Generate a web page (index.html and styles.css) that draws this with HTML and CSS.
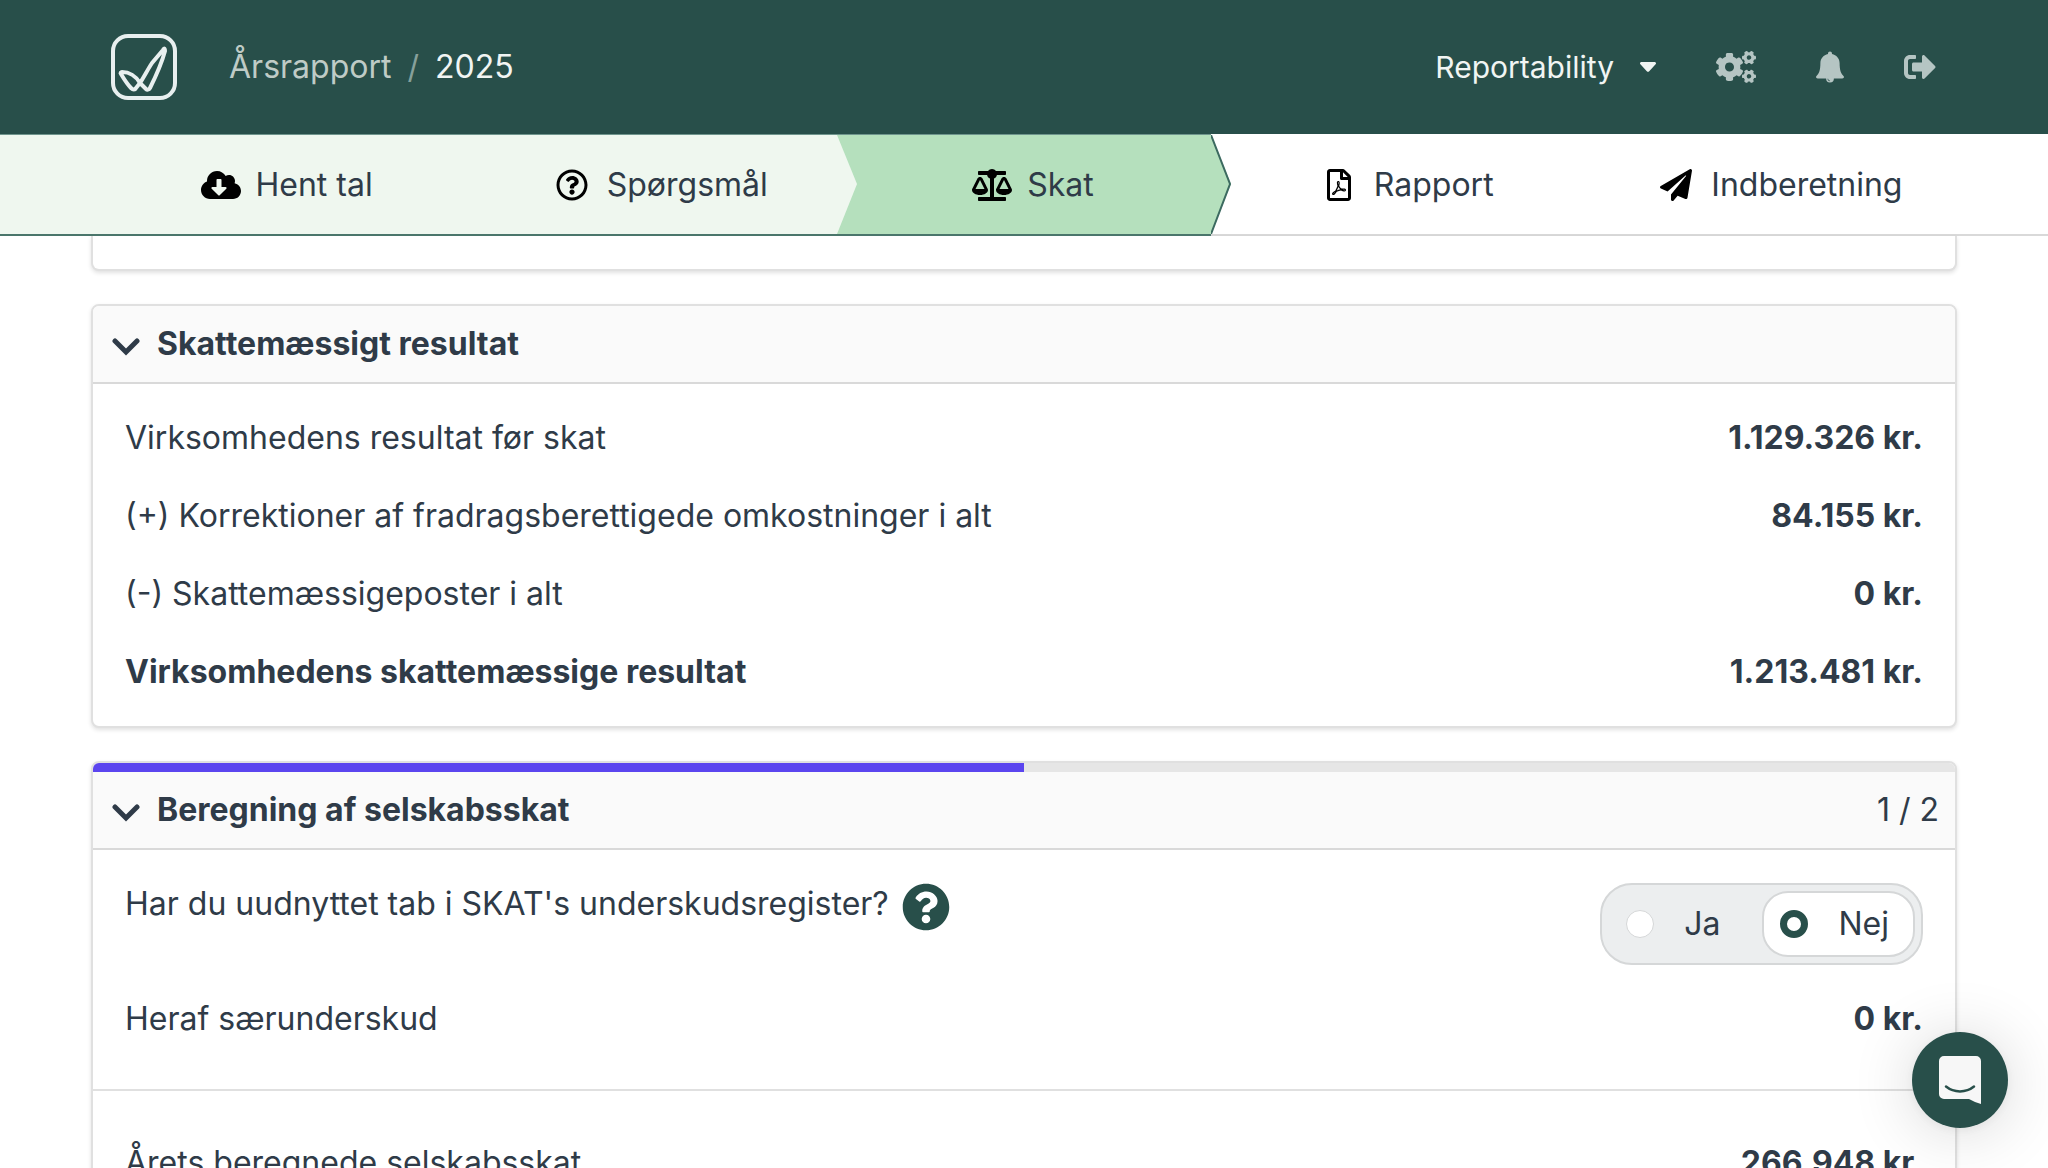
FILE: index.html
```html
<!DOCTYPE html>
<html lang="da">
<head>
  <meta charset="UTF-8">
  <meta name="viewport" content="width=device-width, initial-scale=1.0">
  <title>Årsrapport 2025 - Skat</title>
  <link rel="stylesheet" href="styles.css">
</head>
<body>
  <header class="topbar">
    <a class="logo" href="#" aria-label="Forside">
      <svg width="66" height="66" viewBox="0 0 66 66" fill="none" stroke="currentColor">
        <rect x="2" y="2" width="62" height="62" rx="15" stroke-width="4"/>
        <path d="M11 38C18 38 25 42 29 49L35 55C36 56 38 56 39 54C44 44 51 28 54 17C54 14 53 14 52 16L41 29C37 35 33 43 29 49L25 54C24 56 22 56 20 54C16 50 13 45 10 40C9 39 10 38 11 38Z" stroke-width="4" stroke-linejoin="round"/>
      </svg>
    </a>
    <nav class="breadcrumb">
      <a href="#">Årsrapport</a>
      <span class="slash">/</span>
      <span class="current">2025</span>
    </nav>
    <div class="tools">
      <button class="company" type="button">
        Reportability
        <svg width="16" height="10" viewBox="0 0 16 10" fill="currentColor"><path d="M1.500 0h13c1.300 0 2 1.400 1.100 2.300L9.200 9.300c-.7.700-1.700.7-2.400 0L.4 2.300C-.5 1.400.2 0 1.500 0z"/></svg>
      </button>
      <button class="tool" type="button" aria-label="Indstillinger">
        <svg width="40" height="32" viewBox="0 0 640 512" fill="currentColor"><path d="M512.1 191l-8.2 14.3c-3 5.3-9.4 7.5-15.1 5.4-11.8-4.4-22.6-10.7-32.1-18.6-4.6-3.800-5.800-10.500-2.800-15.700l8.200-14.300c-6.900-8-12.300-17.300-15.900-27.400h-16.500c-6 0-11.200-4.300-12.200-10.300-2-12-2.100-24.600 0-37.100 1-6 6.200-10.400 12.200-10.400h16.500c3.600-10.100 9-19.400 15.900-27.400l-8.200-14.300c-3-5.200-1.900-11.900 2.800-15.700 9.500-7.900 20.400-14.200 32.100-18.600 5.700-2.100 12.100.1 15.100 5.400l8.200 14.300c10.500-1.900 21.200-1.900 31.700 0L552 6.300c3-5.300 9.400-7.500 15.100-5.400 11.800 4.400 22.600 10.700 32.100 18.600 4.600 3.800 5.800 10.500 2.800 15.700l-8.200 14.300c6.900 8 12.300 17.300 15.900 27.400h16.500c6 0 11.200 4.300 12.200 10.300 2 12 2.100 24.600 0 37.100-1 6-6.200 10.400-12.200 10.400h-16.500c-3.600 10.100-9 19.400-15.900 27.400l8.200 14.300c3 5.200 1.900 11.900-2.800 15.700-9.500 7.900-20.400 14.200-32.100 18.600-5.700 2.100-12.100-.1-15.100-5.400l-8.200-14.300c-10.400 1.900-21.200 1.900-31.700 0zm-10.500-58.800c38.500 29.600 82.400-14.300 52.800-52.800-38.500-29.700-82.400 14.300-52.800 52.800zM386.300 286.100l33.700 16.800c10.100 5.800 14.500 18.100 10.500 29.100-8.900 24.200-26.400 46.400-42.600 65.800-7.400 8.900-20.200 11.100-30.300 5.300l-29.100-16.800c-16 13.700-34.600 24.600-54.900 31.700v33.600c0 11.600-8.300 21.600-19.700 23.600-24.600 4.200-50.400 4.400-75.900 0-11.500-2-20-11.900-20-23.600V418c-20.300-7.200-38.900-18-54.900-31.700L74 403c-10 5.800-22.900 3.600-30.300-5.300-16.200-19.400-33.300-41.600-42.200-65.700-4-10.900.4-23.200 10.500-29.100l33.300-16.800c-3.900-20.900-3.900-42.400 0-63.400L12 205.800c-10.100-5.800-14.600-18.100-10.500-29 8.900-24.200 26-46.400 42.200-65.800 7.400-8.900 20.200-11.100 30.300-5.300l29.100 16.800c16-13.700 34.600-24.600 54.900-31.700V57.100c0-11.500 8.200-21.500 19.600-23.500 24.600-4.200 50.500-4.400 76-.1 11.500 2 20 11.900 20 23.600v33.600c20.300 7.200 38.900 18 54.900 31.700l29.100-16.800c10-5.800 22.900-3.600 30.300 5.300 16.200 19.400 33.200 41.600 42.100 65.800 4 10.900.1 23.200-10 29.100l-33.700 16.800c3.900 21 3.900 42.500 0 63.500zm-117.600 21.100c59.200-77-28.700-164.900-105.700-105.700-59.200 77 28.700 164.900 105.700 105.700zm243.400 182.700l-8.200 14.300c-3 5.300-9.400 7.500-15.100 5.400-11.800-4.400-22.600-10.700-32.100-18.600-4.600-3.800-5.800-10.500-2.800-15.700l8.200-14.300c-6.900-8-12.300-17.300-15.900-27.400h-16.500c-6 0-11.200-4.300-12.200-10.300-2-12-2.100-24.600 0-37.100 1-6 6.200-10.400 12.200-10.400h16.500c3.600-10.100 9-19.400 15.900-27.400l-8.200-14.300c-3-5.200-1.900-11.900 2.800-15.700 9.500-7.900 20.400-14.200 32.100-18.600 5.700-2.100 12.100.1 15.100 5.400l8.200 14.300c10.500-1.900 21.200-1.900 31.700 0l8.200-14.300c3-5.300 9.400-7.500 15.100-5.400 11.800 4.400 22.600 10.700 32.100 18.600 4.600 3.800 5.800 10.500 2.800 15.700l-8.200 14.300c6.900 8 12.300 17.300 15.900 27.400h16.500c6 0 11.200 4.300 12.200 10.300 2 12 2.100 24.600 0 37.100-1 6-6.200 10.400-12.200 10.400h-16.500c-3.600 10.100-9 19.400-15.900 27.400l8.200 14.300c3 5.200 1.900 11.900-2.800 15.700-9.500 7.900-20.400 14.200-32.100 18.600-5.700 2.100-12.100-.1-15.100-5.400l-8.200-14.300c-10.400 1.900-21.200 1.900-31.700 0zM501.600 431c38.500 29.600 82.400-14.300 52.800-52.800-38.500-29.600-82.400 14.300-52.800 52.800z"/></svg>
      </button>
      <button class="tool" type="button" aria-label="Notifikationer">
        <svg width="28" height="32" viewBox="0 0 28 32" fill="currentColor"><path fill-rule="evenodd" d="M14 .5c1.200 0 2.100 1 2 2.400 4.400.9 7.600 4.500 7.600 9.100 0 7.500 1.400 10.500 3.900 13 1 1.100.3 2.500-1.200 2.500h-8.400a3.900 3.900 0 0 1-7.800 0H1.700C.2 27.500-.5 26.100.5 25c2.500-2.500 3.900-5.500 3.900-13 0-4.600 3.200-8.200 7.600-9.100-.1-1.400.8-2.400 2-2.400zM11.500 27.700c.1 1.400 1.100 2.400 2.500 2.500v-.7c-1 0-1.800-.8-1.800-1.800z"/></svg>
      </button>
      <button class="tool" type="button" aria-label="Log ud">
        <svg width="32" height="32" viewBox="0 0 512 512" fill="currentColor"><path d="M497 273L329 441c-15 15-41 4.500-41-17v-96H152c-13.300 0-24-10.700-24-24v-96c0-13.300 10.700-24 24-24h136V88c0-21.400 25.900-32 41-17l168 168c9.300 9.400 9.300 24.600 0 34zM192 436v-40c0-6.600-5.400-12-12-12H96c-17.700 0-32-14.300-32-32V160c0-17.700 14.300-32 32-32h84c6.600 0 12-5.400 12-12V76c0-6.600-5.400-12-12-12H96c-53 0-96 43-96 96v192c0 53 43 96 96 96h84c6.600 0 12-5.400 12-12z"/></svg>
      </button>
    </div>
  </header>

  <nav class="steps">
    <a class="step done" href="#">
      <svg class="step-icon" viewBox="0 0 640 512"><path d="M537.6 226.600c4.100-10.700 6.400-22.400 6.400-34.600 0-53-43-96-96-96-19.700 0-38.100 6-53.300 16.200C367 64.200 315.300 32 256 32c-88.400 0-160 71.600-160 160 0 2.700.1 5.400.2 8.100C40.200 219.800 0 273.200 0 336c0 79.500 64.500 144 144 144h368c70.700 0 128-57.300 128-128 0-61.900-44-113.600-102.400-125.400zm-132.900 88.700L299.300 420.700c-6.200 6.200-16.400 6.200-22.600 0L171.300 315.300c-10.100-10.100-2.900-27.300 11.300-27.300H248V176c0-8.800 7.200-16 16-16h48c8.800 0 16 7.200 16 16v112h65.400c14.200 0 21.400 17.200 11.300 27.300z"/></svg>
      Hent tal
    </a>
    <a class="step done" href="#">
      <svg class="step-icon" viewBox="0 0 512 512"><path d="M256 8C119.043 8 8 119.083 8 256c0 136.997 111.043 248 248 248s248-111.003 248-248C504 119.083 392.957 8 256 8zm0 448c-110.532 0-200-89.431-200-200 0-110.495 89.472-200 200-200 110.491 0 200 89.471 200 200 0 110.530-89.431 200-200 200zm107.244-255.200c0 67.052-72.421 68.084-72.421 92.863V300c0 6.627-5.373 12-12 12h-45.647c-6.627 0-12-5.373-12-12v-8.659c0-35.745 27.100-50.034 47.579-61.516 17.561-9.845 28.324-16.541 28.324-29.579 0-17.246-21.999-28.693-39.784-28.693-23.189 0-33.894 10.977-48.942 29.969-4.057 5.120-11.460 6.071-16.666 2.124l-27.824-21.098c-5.107-3.872-6.251-11.066-2.644-16.363C184.846 131.491 214.940 112 261.794 112c49.071 0 101.450 38.304 101.450 88.800zM298 368c0 23.159-18.841 42-42 42s-42-18.841-42-42 18.841-42 42-42 42 18.841 42 42z"/></svg>
      Spørgsmål
      <svg class="arrow" width="20" height="99" viewBox="0 0 20 99"><path d="M0 0L20 49L0 99z"/></svg>
    </a>
    <a class="step active" href="#" aria-current="step">
      <svg class="step-icon" viewBox="0 0 640 512"><path d="M256 336h-.02c0-16.180 1.340-8.730-85.050-181.510-17.650-35.290-68.190-35.360-85.870 0C-2.060 328.750.02 320.330.02 336H0c0 44.180 57.310 80 128 80s128-35.820 128-80zM128 176l72 144H56l72-144zm511.980 160c0-16.180 1.340-8.730-85.050-181.510-17.650-35.290-68.190-35.360-85.870 0-87.120 174.260-85.040 165.840-85.040 181.510H384c0 44.180 57.310 80 128 80s128-35.820 128-80h-.02zM440 320l72-144 72 144H440zm88 128H352V153.250c23.510-10.290 41.160-31.480 46.390-57.250H528c8.840 0 16-7.160 16-16V48c0-8.840-7.160-16-16-16H383.640C369.040 12.680 346.090 0 320 0s-49.040 12.680-63.640 32H112c-8.840 0-16 7.160-16 16v32c0 8.840 7.160 16 16 16h129.610c5.230 25.760 22.870 46.960 46.390 57.250V448H112c-8.840 0-16 7.160-16 16v32c0 8.840 7.160 16 16 16h416c8.840 0 16-7.160 16-16v-32c0-8.840-7.160-16-16-16z"/></svg>
      Skat
      <svg class="arrow" width="20" height="99" viewBox="0 0 20 99"><path d="M0 0L20 49L0 99z"/><path class="edge" d="M0 0L19 49L0 99"/></svg>
    </a>
    <a class="step" href="#">
      <svg class="step-icon" viewBox="0 0 384 512"><path d="M369.900 97.900L286 14C277 5 264.800-.1 252.100-.1H48C21.500 0 0 21.500 0 48v416c0 26.500 21.500 48 48 48h288c26.500 0 48-21.500 48-48V131.900c0-12.700-5.100-25-14.100-34zM332.100 128H256V51.900l76.100 76.100zM48 464V48h160v104c0 13.300 10.700 24 24 24h104v288H48zm250.200-143.700c-12.200-12-47-8.700-64.400-6.500-17.200-10.500-28.700-25-36.800-46.300 3.900-16.100 10.100-40.600 5.400-56-4.200-26.200-37.800-23.600-42.600-5.900-4.400 16.100-.4 38.500 7 67.100-10 23.900-24.900 56-35.400 74.400-20 10.300-47 26.200-51 46.200-3.300 15.800 26 55.200 76.100-31.200 22.400-7.400 46.800-16.500 68.400-20.100 18.900 10.200 41 17 55.800 17 25.500 0 28-28.200 17.500-38.700zm-198.100 77.800c5.100-13.700 24.500-29.500 30.400-35-19 30.300-30.400 35.700-30.400 35zm81.600-190.600c7.400 0 6.700 32.100 1.800 40.800-4.400-13.900-4.300-40.800-1.800-40.800zm-24.400 136.600c9.700-16.900 18-37 24.700-54.700 8.300 15.100 18.900 27.200 30.100 35.500-20.800 4.300-38.900 13.100-54.800 19.200zm131.600-5s-5 6-37.300-7.800c35.100-2.600 40.900 5.400 37.300 7.800z"/></svg>
      Rapport
    </a>
    <a class="step" href="#">
      <svg class="step-icon" viewBox="0 0 512 512"><path d="M476 3.200L12.500 270.600c-18.100 10.400-15.800 35.600 2.200 43.200L121 358.400l287.300-253.200c5.500-4.900 13.300 2.600 8.600 8.300L176 407v80.500c0 23.600 28.500 32.900 42.500 15.800L282 426l124.600 52.200c14.200 6 30.400-2.900 33-18.200l72-432C515 7.800 493.300-6.800 476 3.200z"/></svg>
      Indberetning
    </a>
  </nav>

  <main class="content">
    <section class="card card-end"></section>

    <section class="card">
      <h2 class="card-header">
        <button class="toggle" type="button" aria-expanded="true">
          <svg width="28" height="18" viewBox="0 0 28 18"><path d="M3 3L14 14L25 3"/></svg>
          Skattemæssigt resultat
        </button>
      </h2>
      <dl class="rows">
        <div class="row">
          <dt>Virksomhedens resultat før skat</dt>
          <dd>1.129.326 kr.</dd>
        </div>
        <div class="row">
          <dt>(+) Korrektioner af fradragsberettigede omkostninger i alt</dt>
          <dd>84.155 kr.</dd>
        </div>
        <div class="row">
          <dt>(-) Skattemæssigeposter i alt</dt>
          <dd>0 kr.</dd>
        </div>
        <div class="row total">
          <dt>Virksomhedens skattemæssige resultat</dt>
          <dd>1.213.481 kr.</dd>
        </div>
      </dl>
    </section>

    <section class="card">
      <div class="progress"><div class="progress-bar" style="width: 50%"></div></div>
      <h2 class="card-header">
        <button class="toggle" type="button" aria-expanded="true">
          <svg width="28" height="18" viewBox="0 0 28 18"><path d="M3 3L14 14L25 3"/></svg>
          Beregning af selskabsskat
        </button>
        <span class="count">1 / 2</span>
      </h2>
      <div class="question">
        <span id="underskud">Har du uudnyttet tab i SKAT's underskudsregister?</span>
        <button class="help" type="button" aria-label="Hjælp">
          <svg width="48" height="48" viewBox="0 0 512 512" fill="currentColor"><path d="M504 256c0 136.997-111.043 248-248 248S8 392.997 8 256C8 119.083 119.043 8 256 8s248 111.083 248 248zM262.655 90c-54.497 0-89.255 22.957-116.549 63.758-3.536 5.286-2.353 12.415 2.715 16.258l34.699 26.310c5.205 3.947 12.621 3.008 16.665-2.122 17.864-22.658 30.113-35.797 57.303-35.797 20.429 0 45.698 13.148 45.698 32.958 0 14.976-12.363 22.667-32.534 33.976C247.128 238.528 216 254.941 216 296v4c0 6.627 5.373 12 12 12h56c6.627 0 12-5.373 12-12v-1.333c0-28.462 83.186-29.647 83.186-106.667 0-58.002-60.165-102-116.531-102zM256 338c-25.365 0-46 20.635-46 46 0 25.364 20.635 46 46 46s46-20.636 46-46c0-25.365-20.635-46-46-46z"/></svg>
        </button>
        <div class="switch" role="radiogroup" aria-labelledby="underskud">
          <label class="option" for="ja"><input type="radio" id="ja" name="underskud" value="ja">Ja</label>
          <label class="option" for="nej"><input type="radio" id="nej" name="underskud" value="nej" checked>Nej</label>
        </div>
      </div>
      <dl class="rows after-question">
        <div class="row">
          <dt>Heraf særunderskud</dt>
          <dd>0 kr.</dd>
        </div>
      </dl>
      <dl class="rows result">
        <div class="row">
          <dt>Årets beregnede selskabsskat</dt>
          <dd>266.948 kr.</dd>
        </div>
      </dl>
    </section>
  </main>

  <button class="chat" type="button" aria-label="Åbn chat">
    <svg width="42" height="48" viewBox="0 0 42 48">
      <path fill="#f7f7f7" d="M5 0h32a5 5 0 0 1 5 5v43c-4-1-8-3-12-5H5a5 5 0 0 1-5-5V5a5 5 0 0 1 5-5z"/>
      <path d="M7 30.500c8 6.500 20 6.500 28 0" fill="none" stroke="#284f4a" stroke-width="2.500" stroke-linecap="round"/>
    </svg>
  </button>
</body>
</html>
```
FILE: styles.css
```css
* {
  box-sizing: border-box;
}

body {
  margin: 0;
  height: 100vh;
  overflow: hidden;
  font-family: Inter, "Liberation Sans", sans-serif;
  font-size: 32px;
  line-height: 48px;
  color: #2f3b48;
  background-color: #fff;
}

button {
  padding: 0;
  border: none;
  background: none;
  font: inherit;
  color: inherit;
  cursor: pointer;
}

a {
  color: inherit;
  text-decoration: none;
}

svg {
  display: block;
  flex: none;
}

/* Top bar */
.topbar {
  display: flex;
  align-items: center;
  height: 134px;
  padding: 0 112px 0 111px;
  color: #f1f5f3;
  background-color: #284f4a;
}

.logo {
  margin-right: 52px;
  color: #e8efef;
}

.breadcrumb {
  display: flex;
  gap: 16px;
}

.breadcrumb a {
  color: #bfcbc6;
}

.slash {
  color: #86a09b;
}

.tools {
  display: flex;
  align-items: center;
  gap: 60px;
  margin-left: auto;
}

.company {
  display: flex;
  align-items: center;
  gap: 26px;
  font-size: 30px;
}

.tool {
  color: #b5c5c3;
}

/* Steps */
.steps {
  display: grid;
  grid-template-columns: repeat(5, 1fr);
  height: 102px;
  padding: 0 91px;
  background:
    linear-gradient(to right, #6f958d 50%, #fff 50%) top / 100% 1px no-repeat,
    linear-gradient(to right, #4a766b 50%, #d9d9d9 50%) bottom / 100% 2px no-repeat,
    linear-gradient(to right, #eff7ef 50%, #fff 50%);
}

.step {
  position: relative;
  display: flex;
  align-items: center;
  justify-content: center;
  gap: 15px;
  padding-left: 18px;
}

.step-icon {
  width: 40px;
  height: 32px;
  fill: #000;
}

.done,
.active {
  border-top: 1px solid #6f958d;
  border-bottom: 2px solid #4a766b;
}

.done {
  background-color: #eff7ef;
}

.active {
  background-color: #b5e0bd;
}

.arrow {
  position: absolute;
  top: 0;
  left: 100%;
  z-index: 1;
  fill: #eff7ef;
}

.active .arrow {
  fill: #b5e0bd;
}

.edge {
  fill: none;
  stroke: #3c6a60;
  stroke-width: 2;
}

/* Cards */
.content {
  padding: 0 91px;
}

.card {
  margin-bottom: 33px;
  border: 2px solid #e0e0e0;
  border-radius: 8px;
  background-color: #fff;
  box-shadow: 0 2px 4px rgba(0, 0, 0, 0.12);
  overflow: hidden;
}

.card-end {
  height: 35px;
  border-top: none;
  border-radius: 0 0 8px 8px;
}

.card-header {
  display: flex;
  align-items: center;
  justify-content: space-between;
  margin: 0;
  padding: 14px 16px 14px 19px;
  border-bottom: 2px solid #d9d9d9;
  font-size: 32px;
  background-color: #fafafa;
}

.toggle {
  display: flex;
  align-items: center;
  gap: 17px;
  font-weight: 700;
}

.toggle svg {
  margin-top: 6px;
  fill: none;
  stroke: #2f3b48;
  stroke-width: 5;
  stroke-linecap: round;
}

.count {
  font-weight: 400;
}

.progress {
  height: 9px;
  background-color: #e6e6e6;
}

.progress-bar {
  height: 100%;
  background-color: #5b45ef;
}

.rows {
  display: flex;
  flex-direction: column;
  gap: 30px;
  margin: 0;
  padding: 30px 32px;
}

.row {
  display: flex;
  justify-content: space-between;
}

.row dd {
  margin: 0;
  font-weight: 700;
}

.total {
  font-weight: 700;
}

.question {
  display: flex;
  align-items: flex-start;
  padding: 30px 32px 0;
}

.help {
  margin: 3px 0 0 13px;
  color: #284f4a;
}

.switch {
  display: flex;
  gap: 16px;
  margin: 3px 0 0 auto;
  padding: 6px;
  border: 2px solid #d5d7d8;
  border-radius: 32px;
  background-color: #eceeef;
}

.option {
  display: flex;
  align-items: center;
  gap: 30px;
  padding: 7px 24px 7px 16px;
  border: 2px solid transparent;
  border-radius: 26px;
  cursor: pointer;
}

.option:has(input:checked) {
  border-color: #d5d7d8;
  background-color: #fff;
}

.option input {
  appearance: none;
  width: 28px;
  height: 28px;
  margin: 0;
  border: 1px solid #d5d7d8;
  border-radius: 50%;
  background-color: #fff;
}

.option input:checked {
  border: 7px solid #284f4a;
}

.after-question {
  padding-bottom: 46px;
}

.result {
  padding-top: 48px;
  border-top: 2px solid #e0e0e0;
}

/* Chat launcher */
.chat {
  position: fixed;
  right: 40px;
  bottom: 40px;
  display: flex;
  align-items: center;
  justify-content: center;
  width: 96px;
  height: 96px;
  border-radius: 50%;
  background-color: #284f4a;
  box-shadow: 0 2px 12px rgba(0, 0, 0, 0.06), 0 4px 64px rgba(0, 0, 0, 0.16);
}
```
